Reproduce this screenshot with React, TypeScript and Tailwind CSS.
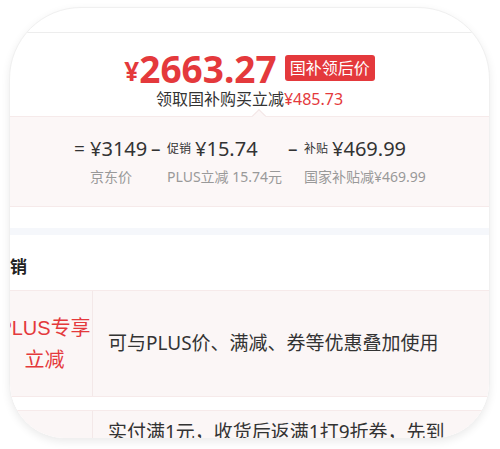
const cjk = { fontFamily: '"Noto Sans", "Noto Sans CJK SC", sans-serif' };

function Summary() {
  return (
    <div className="flex flex-col items-center">
      <div className="flex items-center h-[38px] mt-[16px]">
        <span className="text-[26px] font-bold text-[#e4393c] leading-none mt-[6px]">¥</span>
        <span className="text-[37px] font-bold text-[#e4393c] leading-none">2663.27</span>
        <span className="ml-[8px] h-[26px] px-[5px] flex items-center rounded-[3px] bg-[#e4393c] text-white text-[16px] leading-none">
          国补领后价
        </span>
      </div>
      <div className="mt-[2px] text-[16px] leading-[20px] text-[#333]">
        领取国补购买立减<span className="text-[#e4393c]">¥485.73</span>
      </div>
    </div>
  );
}

function Breakdown() {
  const cols = [
    { sign: '=', tag: '', value: '¥3149', label: '京东价', w: 'w-[77px]' },
    { sign: '–', tag: '促销', value: '¥15.74', label: 'PLUS立减 15.74元', w: 'w-[137px]' },
    { sign: '–', tag: '补贴', value: '¥469.99', label: '国家补贴减¥469.99', w: 'w-[150px]' },
  ];
  return (
    <div className="relative mt-[7px] h-[91px] bg-[#fcf7f7] border-t border-b border-[#f6eaea]">
      {/* bubble pointer */}
      <div className="absolute left-[244px] top-[-6px] w-[10px] h-[10px] rotate-45 bg-[#fcf7f7] border-l border-t border-[#f3e6e6]" />
      <div className="flex pl-[64px] pt-[19px]">
        {cols.map((c) => (
          <div key={c.value} className={`${c.w} flex flex-col`}>
            <div className="flex items-center h-[26px] text-[#333] whitespace-nowrap">
              <span className="text-[19px] w-[16px]">{c.sign}</span>
              {c.tag && <span className="text-[12px] mr-[4px]">{c.tag}</span>}
              <span className="text-[20px]">{c.value}</span>
            </div>
            <div className="pl-[16px] mt-[6px] text-[14px] leading-[18px] text-[#999] whitespace-nowrap">{c.label}</div>
          </div>
        ))}
      </div>
    </div>
  );
}

function Promo() {
  return (
    <div className="bg-white">
      <div className="h-[55px] ml-[-17px] pt-[8px] flex items-center text-[17px] font-bold text-[#222]">
        促销
      </div>
      <div className="ml-[-19px] flex bg-[#fbf6f6] border-t border-b border-[#f6eaea] h-[107px]">
        <div className="w-[102px] pl-[6px] flex items-center justify-center text-center text-[20px] leading-[31px] text-[#e4393c] border-r border-[#f3e8e8] whitespace-nowrap">
          <span>
            <span className="font-['Liberation_Sans']">PLUS</span>专享
            <br />
            立减
          </span>
        </div>
        <div className="flex-1 flex items-center pl-[15px] text-[19px] text-[#333] whitespace-nowrap">
          可与PLUS价、满减、券等优惠叠加使用
        </div>
      </div>
      <div className="mt-[13px] ml-[-19px] flex bg-[#fbf6f6] border-t border-[#f6eaea] h-[60px]">
        <div className="w-[102px] border-r border-[#f3e8e8]" />
        <div className="flex-1 pl-[15px] pt-[8px] text-[19px] leading-[26px] text-[#333] whitespace-nowrap">
          实付满1元，收货后返满1打9折券，先到
        </div>
      </div>
    </div>
  );
}

export default function App() {
  return (
    <div className="w-[500px] h-[449px] bg-white overflow-hidden" style={cjk}>
      <div className="ml-[9px] mt-[7px] w-[481px] h-[432px] rounded-t-[72px] rounded-b-[56px] overflow-hidden bg-white border border-[#f0f0f0] shadow-[0_3px_8px_rgba(0,0,0,0.08)]">
        <div className="h-[25px] border-b border-[#ededed]" />
        <Summary />
        <Breakdown />
        <div className="h-[21px] bg-white" />
        <div className="h-[7px] bg-[#f5f7fb]" />
        <Promo />
      </div>
    </div>
  );
}
